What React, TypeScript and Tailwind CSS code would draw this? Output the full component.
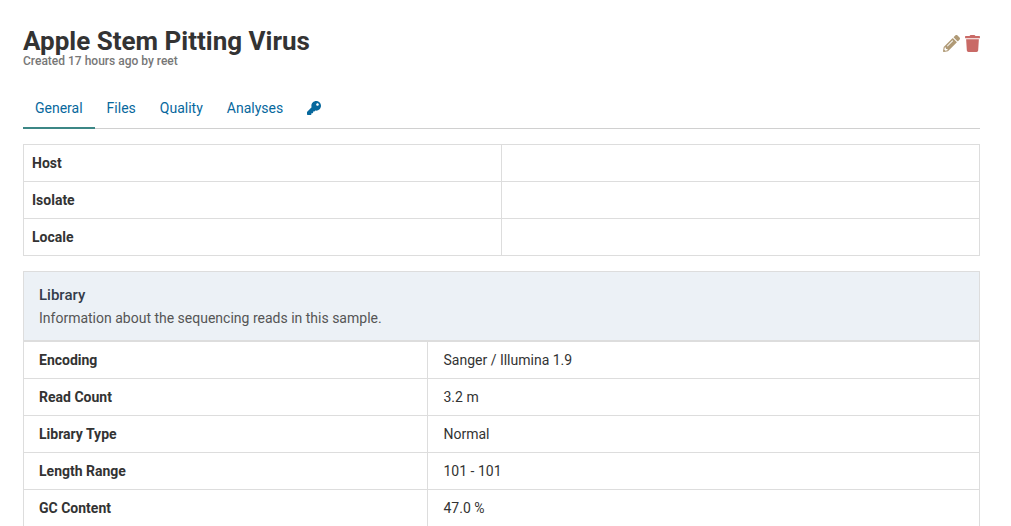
import { FaKey, FaPencilAlt, FaTrash } from "react-icons/fa";

const tabs = ["General", "Files", "Quality", "Analyses"];
const metadata = ["Host", "Isolate", "Locale"];
const library = [
  ["Encoding", "Sanger / Illumina 1.9"],
  ["Read Count", "3.2 m"],
  ["Library Type", "Normal"],
  ["Length Range", "101 - 101"],
  ["GC Content", "47.0 %"],
];

export default function App() {
  return (
    <div className="h-screen overflow-hidden bg-white pt-6 pr-[31px] pl-[23px] font-['Roboto',sans-serif] text-sm leading-5 text-[#333]">
      <header className="flex items-start justify-between">
        <div>
          <h1 className="text-[26px] leading-[34px] font-bold">Apple Stem Pitting Virus</h1>
          <p className="-mt-1 text-xs leading-[14px] font-medium text-[#777]">Created 17 hours ago by reet</p>
        </div>
        <div className="mt-[11px] flex gap-[5px]">
          <button type="button" aria-label="Edit" className="text-[#b09a76]">
            <FaPencilAlt className="h-[17px] w-[17px]" />
          </button>
          <button type="button" aria-label="Delete" className="text-[#c96a66]">
            <FaTrash className="h-[17px] w-[15px]" />
          </button>
        </div>
      </header>

      <nav className="mt-[21px] flex border-b border-[#d0d0d0]">
        {tabs.map((tab, i) => (
          <a
            key={tab}
            href="#"
            className={
              i === 0
                ? "-mb-px border-b-2 border-[#3c8786] px-3 py-[9px] text-[#07689d]"
                : "-mb-px border-b-2 border-transparent px-3 py-[9px] text-[#07689d]"
            }
          >
            {tab}
          </a>
        ))}
        <a href="#" aria-label="Rights" className="flex items-center px-3 pb-0.5 text-[#07689d]">
          <FaKey size={14} />
        </a>
      </nav>

      <table className="mt-[15px] w-full table-fixed border-collapse border border-[#ddd]">
        <tbody>
          {metadata.map((name) => (
            <tr key={name} className="border border-[#ddd]">
              <th scope="row" className="w-1/2 border border-[#ddd] p-2 text-left font-bold">{name}</th>
              <td className="border border-[#ddd] p-2" />
            </tr>
          ))}
        </tbody>
      </table>

      <section className="mt-[15px] border border-[#ddd]">
        <div className="border-b border-[#ddd] bg-[#ecf1f6] px-[15px] pt-3 pb-2.5">
          <h2 className="text-[15px] leading-[22px] font-medium text-[#333c4b]">Library</h2>
          <p className="leading-6 text-[#555]">Information about the sequencing reads in this sample.</p>
        </div>
        <table className="w-full table-fixed border-collapse">
          <tbody>
            {library.map(([name, value]) => (
              <tr key={name} className="border-t border-[#ddd]">
                <th scope="row" className="w-[403px] border-r border-[#ddd] px-[15px] py-2 text-left font-bold">{name}</th>
                <td className="px-4 py-2">{value}</td>
              </tr>
            ))}
          </tbody>
        </table>
      </section>
    </div>
  );
}
